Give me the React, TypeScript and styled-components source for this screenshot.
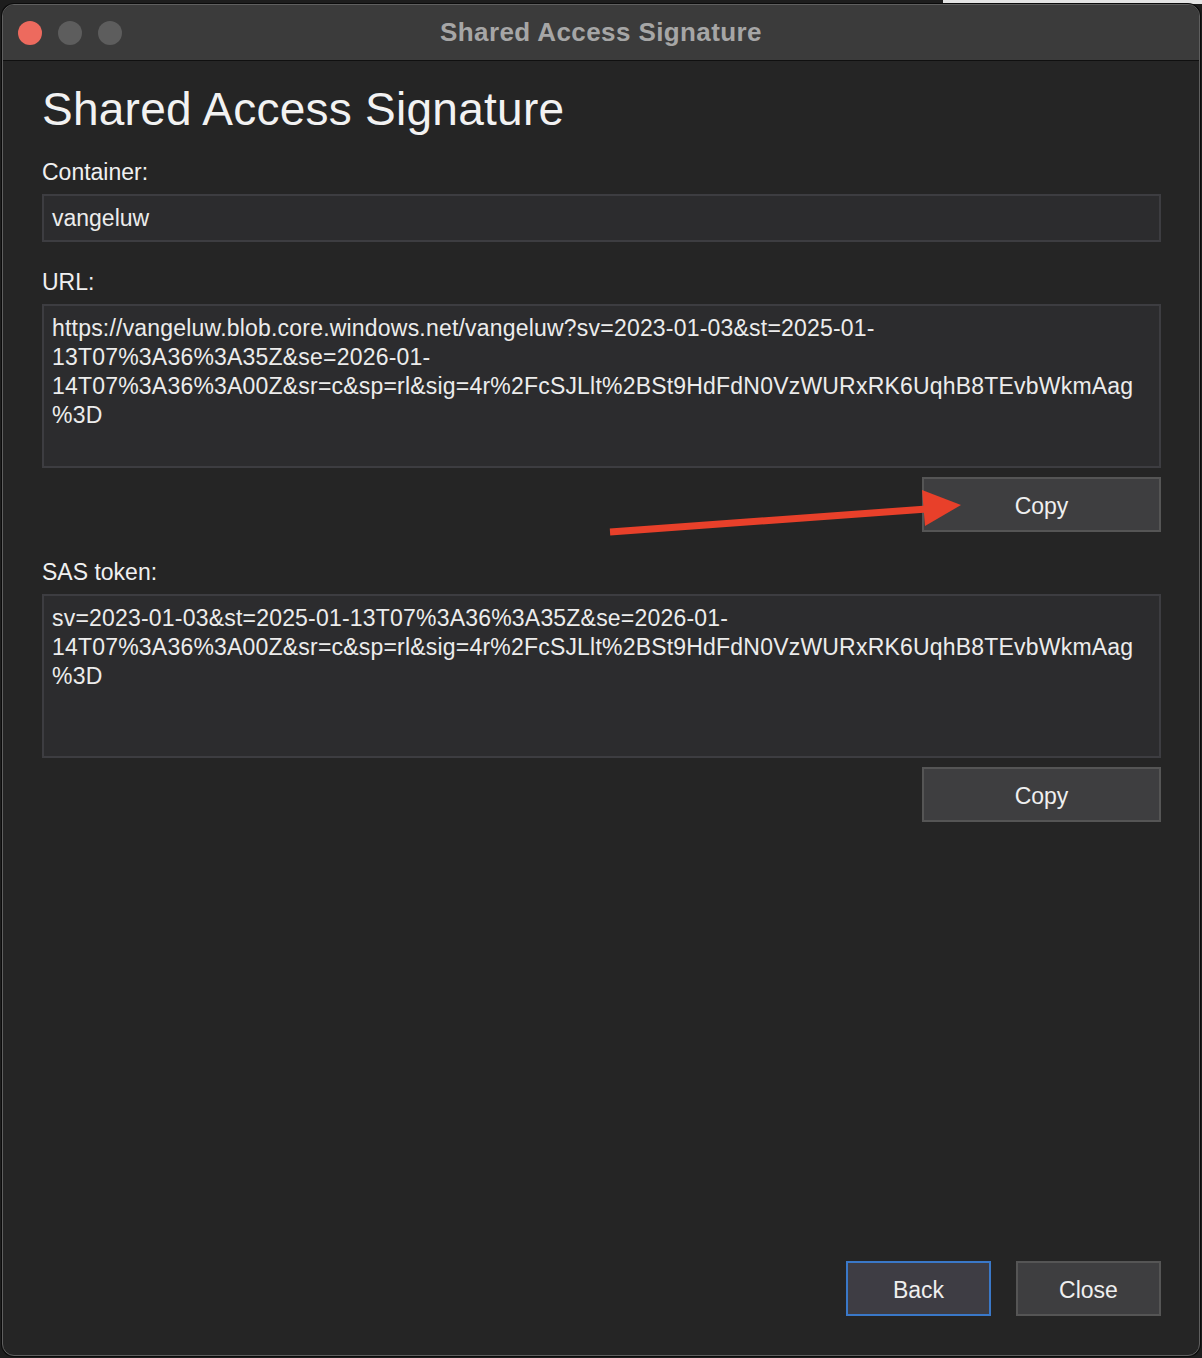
import React from "react";
import styled, { createGlobalStyle } from "styled-components";

const Global = createGlobalStyle`
  html, body {
    margin: 0;
    padding: 0;
  }
  body {
    background:
      linear-gradient(#e4e4e4, #e4e4e4) no-repeat 943px 0 / 259px 4px,
      #1d1d1d;
    font-family: "Liberation Sans", Arial, sans-serif;
    width: 1202px;
    height: 1358px;
    overflow: hidden;
  }
`;

const Window = styled.div`
  margin: 4px 0 0 2px;
  width: 1198px;
  height: 1352px;
  box-sizing: border-box;
  border: 1px solid #5f5f5f;
  box-shadow: 0 0 0 1px #0b0b0b;
  border-radius: 12px;
  overflow: hidden;
  background: #252525;
  display: flex;
  flex-direction: column;
`;

const TitleBar = styled.div`
  height: 56px;
  box-sizing: border-box;
  background: #3b3b3b;
  border-bottom: 1px solid #101010;
  display: grid;
  grid-template-columns: 1fr auto 1fr;
  align-items: center;
  padding: 0 15px;
`;

const Lights = styled.div`
  display: flex;
  gap: 16px;
  align-items: center;
`;

const Light = styled.span<{ $color: string }>`
  width: 24px;
  height: 24px;
  border-radius: 50%;
  background: ${(p) => p.$color};
`;

const WindowTitle = styled.div`
  font-weight: 700;
  font-size: 26px;
  line-height: 30px;
  margin-top: -2px;
  letter-spacing: 0.4px;
  color: #a6a6a6;
`;

const Content = styled.div`
  flex: 1;
  display: flex;
  flex-direction: column;
  padding: 21px 38px 39px 39px;
`;

const Heading = styled.h1`
  margin: 0 0 22px;
  font-weight: 400;
  font-size: 46px;
  line-height: 54px;
  color: #f2f2f2;
  letter-spacing: 0.25px;
`;

const Label = styled.div<{ $top?: number }>`
  margin-top: ${(p) => p.$top ?? 0}px;
  font-size: 23px;
  line-height: 28px;
  color: #f0f0f0;
  margin-bottom: 8px;
`;

const Field = styled.div`
  height: 48px;
  box-sizing: border-box;
  border: 2px solid #3d3d41;
  background: #2c2c2e;
  padding: 0 8px;
  font-size: 23px;
  line-height: 44px;
  color: #ececec;
`;

const TextArea = styled.div`
  height: 164px;
  box-sizing: border-box;
  border: 2px solid #3d3d41;
  background: #2c2c2e;
  padding: 8px 8px;
  font-size: 23px;
  line-height: 29px;
  color: #ececec;
  overflow: hidden;
`;

const Line = styled.div`
  white-space: pre;
  letter-spacing: 0.2px;
`;

const ButtonRow = styled.div`
  position: relative;
  display: flex;
  justify-content: flex-end;
  margin-top: 9px;
`;

const Button = styled.button<{ $width: number; $focused?: boolean }>`
  width: ${(p) => p.$width}px;
  height: 55px;
  box-sizing: border-box;
  background: ${(p) => (p.$focused ? "#3e3d44" : "#3e3e40")};
  border: 2px solid ${(p) => (p.$focused ? "#3a78c8" : "#555555")};
  border-radius: 0;
  color: #efefef;
  font-family: "Liberation Sans", Arial, sans-serif;
  font-size: 23px;
  padding: 3px 0 0;
  cursor: default;
`;

const Arrow = styled.svg`
  position: absolute;
  left: 563px;
  top: 10px;
  width: 360px;
  height: 60px;
  overflow: visible;
`;

const Footer = styled.div`
  margin-top: auto;
  display: flex;
  justify-content: flex-end;
  gap: 25px;
`;

const urlLines = [
  "https://vangeluw.blob.core.windows.net/vangeluw?sv=2023-01-03&st=2025-01-",
  "13T07%3A36%3A35Z&se=2026-01-",
  "14T07%3A36%3A00Z&sr=c&sp=rl&sig=4r%2FcSJLlt%2BSt9HdFdN0VzWURxRK6UqhB8TEvbWkmAag",
  "%3D",
];

const sasLines = [
  "sv=2023-01-03&st=2025-01-13T07%3A36%3A35Z&se=2026-01-",
  "14T07%3A36%3A00Z&sr=c&sp=rl&sig=4r%2FcSJLlt%2BSt9HdFdN0VzWURxRK6UqhB8TEvbWkmAag",
  "%3D",
];

export default function App() {
  return (
    <>
      <Global />
      <Window>
        <TitleBar>
          <Lights>
            <Light $color="#ed6a5e" />
            <Light $color="#5d5d5d" />
            <Light $color="#5d5d5d" />
          </Lights>
          <WindowTitle>Shared Access Signature</WindowTitle>
          <div />
        </TitleBar>
        <Content>
          <Heading>Shared Access Signature</Heading>
          <Label>Container:</Label>
          <Field>vangeluw</Field>
          <Label $top={26}>URL:</Label>
          <TextArea>
            {urlLines.map((l, i) => (
              <Line key={i}>{l}</Line>
            ))}
          </TextArea>
          <ButtonRow>
            <Arrow viewBox="0 0 360 60">
              <line x1="5" y1="45" x2="322" y2="22" stroke="#e8402a" strokeWidth="7" />
              <polygon points="317,3 356,18 320,39" fill="#e8402a" />
            </Arrow>
            <Button $width={239}>Copy</Button>
          </ButtonRow>
          <Label $top={26}>SAS token:</Label>
          <TextArea>
            {sasLines.map((l, i) => (
              <Line key={i}>{l}</Line>
            ))}
          </TextArea>
          <ButtonRow>
            <Button $width={239}>Copy</Button>
          </ButtonRow>
          <Footer>
            <Button $width={145} $focused>
              Back
            </Button>
            <Button $width={145}>Close</Button>
          </Footer>
        </Content>
      </Window>
    </>
  );
}
